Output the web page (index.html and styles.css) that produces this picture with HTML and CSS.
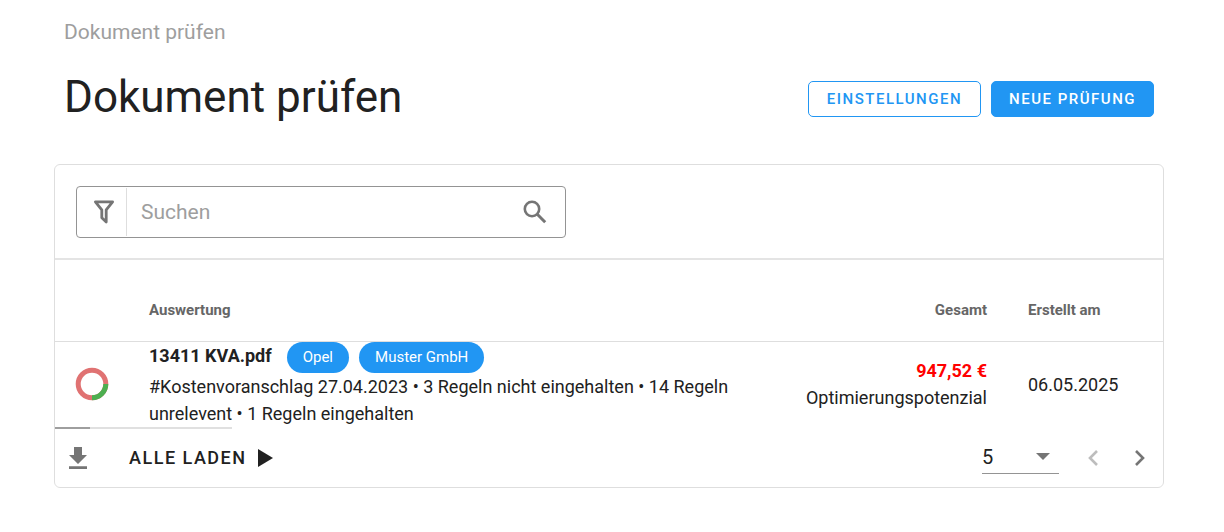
FILE: index.html
```html
<!DOCTYPE html>
<html lang="de">
<head>
<meta charset="utf-8">
<title>Dokument prüfen</title>
<link rel="stylesheet" href="styles.css">
</head>
<body>
<main class="page">
  <nav class="breadcrumb" aria-label="Brotkrumen"><a href="#">Dokument prüfen</a></nav>
  <header class="page-header">
    <h1 class="page-title">Dokument prüfen</h1>
    <div class="actions">
      <button class="btn btn-outlined" type="button">Einstellungen</button>
      <button class="btn btn-filled" type="button">Neue Prüfung</button>
    </div>
  </header>

  <section class="card">
    <div class="toolbar">
      <form class="search">
        <button class="search-filter" type="button" aria-label="Filter">
          <svg width="22" height="24" viewBox="0 0 22 24"><path d="M2.4 1.8h17.2L13.2 9.8v12.2L8.8 17.8v-8z" fill="none" stroke="currentColor" stroke-width="2.8" stroke-linejoin="round"/></svg>
        </button>
        <input class="search-input" type="text" placeholder="Suchen" aria-label="Suchen">
        <button class="search-submit" type="submit" aria-label="Suche starten">
          <svg width="24" height="24" viewBox="0 0 24 24"><circle cx="9" cy="9" r="7.2" fill="none" stroke="currentColor" stroke-width="2.6"/><path d="M14 14l8.2 8.2" fill="none" stroke="currentColor" stroke-width="3"/></svg>
        </button>
      </form>
    </div>

    <table class="table">
      <thead>
        <tr>
          <th class="col-chart"></th>
          <th class="col-result">Auswertung</th>
          <th class="col-total">Gesamt</th>
          <th class="col-date">Erstellt am</th>
        </tr>
      </thead>
      <tbody>
        <tr>
          <td class="col-chart">
            <svg class="donut" width="34" height="34" viewBox="0 0 34 34" fill="none" stroke-width="5"><circle cx="17" cy="17" r="13.8" stroke="#e07272"/><path d="M30.8 17A13.8 13.8 0 0 1 17 30.8" stroke="#4caf50"/></svg>
          </td>
          <td class="col-result">
            <div class="file">
              <strong class="file-name">13411 KVA.pdf</strong>
              <span class="chips"><span class="chip">Opel</span><span class="chip">Muster GmbH</span></span>
            </div>
            <p class="summary">#Kostenvoranschlag 27.04.2023 • 3 Regeln nicht eingehalten • 14 Regeln unrelevent • 1 Regeln eingehalten</p>
          </td>
          <td class="col-total"><strong class="amount">947,52 €</strong><br>Optimierungspotenzial</td>
          <td class="col-date">06.05.2025</td>
        </tr>
      </tbody>
    </table>

    <div class="progress"><div class="progress-bar"></div></div>

    <footer class="card-footer">
      <button class="icon-btn" type="button" aria-label="Herunterladen">
        <svg width="18" height="22" viewBox="0 0 18 22" fill="currentColor"><path d="M5 0h8v8h5l-9 9-9-9h5zM0 19.2h18V22H0z"/></svg>
      </button>
      <button class="load-all" type="button">Alle laden
        <svg width="15" height="18" viewBox="0 0 15 18" fill="currentColor"><path d="M0 0l15 9-15 9z"/></svg>
      </button>
      <div class="pager">
        <span class="page-size">
          <select class="page-select" aria-label="Einträge pro Seite"><option>5</option><option>10</option><option>25</option></select>
          <svg class="caret" width="14" height="7" viewBox="0 0 14 7" fill="currentColor"><path d="M0 0h14L7 7z"/></svg>
        </span>
        <div class="pager-nav">
          <button class="icon-btn" type="button" aria-label="Vorherige Seite" disabled>
            <svg width="10" height="16" viewBox="0 0 10 16" fill="none" stroke="currentColor" stroke-width="2.6"><path d="M9 1L2 8l7 7"/></svg>
          </button>
          <button class="icon-btn" type="button" aria-label="Nächste Seite">
            <svg width="10" height="16" viewBox="0 0 10 16" fill="none" stroke="currentColor" stroke-width="2.6"><path d="M1 1l7 7-7 7"/></svg>
          </button>
        </div>
      </div>
    </footer>
  </section>
</main>
</body>
</html>
```
FILE: styles.css
```css
* {
  box-sizing: border-box;
}

body {
  margin: 0;
  background: #fff;
  color: #212121;
  font-family: Roboto, "Liberation Sans", sans-serif;
  font-size: 18px;
  line-height: 27px;
}

button,
input,
select {
  margin: 0;
  padding: 0;
  border: 0;
  background: none;
  color: inherit;
  font: inherit;
}

button {
  cursor: pointer;
}

svg {
  display: block;
}

.page {
  padding: 20px 60px 40px 54px;
}

.breadcrumb {
  padding: 0 10px;
  font-size: 21px;
  line-height: 24px;
}

.breadcrumb a {
  color: #9e9e9e;
  text-decoration: none;
}

.page-header {
  display: flex;
  align-items: center;
  justify-content: space-between;
  padding: 23px 10px 37px;
}

.page-title {
  margin: 0;
  font-size: 44px;
  font-weight: 400;
  line-height: 60px;
}

.actions {
  display: flex;
  gap: 10px;
  padding-top: 4px;
}

.btn {
  height: 36px;
  padding: 0 17px;
  border: 1px solid #2196f3;
  border-radius: 5px;
  font-size: 15px;
  font-weight: 500;
  letter-spacing: 1.5px;
  line-height: 20px;
  text-transform: uppercase;
}

.btn-outlined {
  padding: 0 18px;
  color: #2196f3;
}

.btn-filled {
  background: #2196f3;
  color: #fff;
}

.card {
  border: 1px solid #dedede;
  border-radius: 6px;
}

.toolbar {
  padding: 21px 21px 20px;
  border-bottom: 2px solid #e4e4e4;
}

.search {
  display: flex;
  align-items: center;
  width: 46%;
  height: 52px;
  border: 1px solid #949494;
  border-radius: 4px;
  color: #757575;
}

.search-filter {
  display: flex;
  align-items: center;
  justify-content: center;
  width: 50px;
  height: 48px;
  padding-left: 5px;
  border-right: 1px solid #dedede;
}

.search-input {
  flex: 1;
  min-width: 0;
  padding: 0 14px;
  outline: 0;
  color: #212121;
  font-size: 21px;
}

.search-input::placeholder {
  color: #9e9e9e;
  opacity: 1;
}

.search-submit {
  padding-right: 18px;
}

.table {
  width: 100%;
  border-collapse: collapse;
}

.table th {
  height: 81px;
  padding: 20px 0 0;
  border-bottom: 1px solid #dedede;
  color: #666;
  font-size: 15px;
  font-weight: 700;
  text-align: left;
}

.table td {
  padding: 0;
}

.table .col-chart {
  width: 94px;
  padding-left: 20px;
}

.table .col-total {
  width: 240px;
  text-align: right;
}

.table .col-date {
  width: 176px;
  padding-left: 41px;
}

.file {
  display: flex;
  align-items: baseline;
  gap: 15px;
}

.chips {
  display: flex;
  gap: 10px;
}

.chip {
  padding: 0 16px;
  border-radius: 16px;
  background: #2196f3;
  color: #fff;
  font-size: 15px;
  line-height: 31px;
}

.summary {
  margin: 0;
}

.amount {
  color: #f00;
}

.progress {
  width: 16%;
  height: 2px;
  background: #e0e0e0;
}

.progress-bar {
  width: 20%;
  height: 2px;
  background: #9e9e9e;
}

.card-footer {
  display: flex;
  align-items: center;
  height: 58px;
  padding: 0 18px 0 14px;
}

.icon-btn {
  color: #757575;
}

.icon-btn:disabled {
  color: #bdbdbd;
}

.load-all {
  display: flex;
  align-items: center;
  gap: 11px;
  margin-left: 42px;
  font-weight: 500;
  letter-spacing: 1.5px;
  text-transform: uppercase;
}

.pager {
  display: flex;
  align-items: center;
  gap: 29px;
  margin-left: auto;
}

.pager-nav {
  display: flex;
  gap: 37px;
}

.page-size {
  display: grid;
  align-items: center;
  width: 77px;
  border-bottom: 1px solid #949494;
}

.page-select,
.caret {
  grid-area: 1 / 1;
}

.page-select {
  width: 100%;
  height: 32px;
  appearance: none;
  font-size: 20px;
}

.caret {
  justify-self: end;
  margin: 0 9px 2px 0;
  color: #757575;
  pointer-events: none;
}
```
